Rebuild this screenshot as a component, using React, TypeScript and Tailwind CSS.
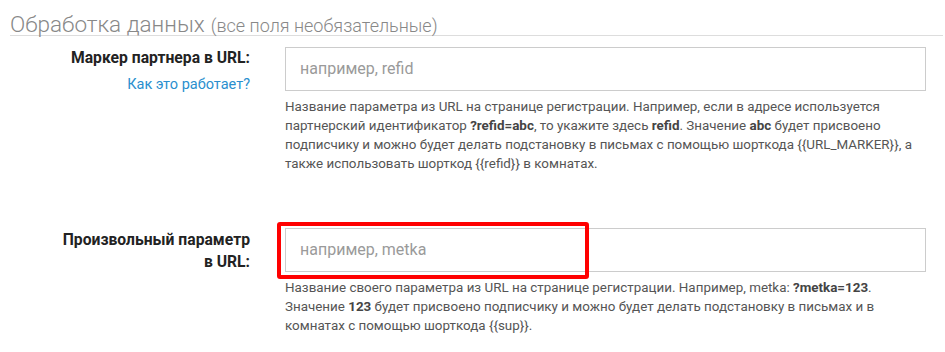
import React from "react";

const B = ({ children }: { children: React.ReactNode }) => (
  <b className="font-bold text-[#444]">{children}</b>
);

const Field = ({ placeholder }: { placeholder: string }) => (
  <div className="h-[44px] border border-[#cccccc] bg-white flex items-center pl-[14px] text-[16px] text-[#9a9a9a] whitespace-nowrap">
    {placeholder}
  </div>
);

export default function App() {
  return (
    <div className="w-[945px] h-[352px] bg-white font-['Roboto','Liberation_Sans',sans-serif] overflow-hidden">
      <div className="ml-[10px] mr-[2px] h-[36px] pt-[12px] border-b border-[#dddddd] text-[#888888] whitespace-nowrap flex items-baseline leading-[24px]">
        <span className="text-[22.5px] font-light">Обработка данных</span>
        <span className="ml-[6px] text-[18px] font-light">(все поля необязательные)</span>
      </div>

      <div className="mt-[11px] flex pr-[19px]">
        <div className="w-[250px] shrink-0 text-right">
          <div className="text-[15.7px] leading-[22px] font-bold text-[#222]">Маркер партнера в URL:</div>
          <div className="mt-[5px] text-[14.5px] leading-[22px] text-[#2a8fce]">Как это работает?</div>
        </div>
        <div className="ml-[35px] flex-1">
          <Field placeholder="например, refid" />
          <div className="mt-[6px] text-[13.4px] leading-[19px] text-[#555] whitespace-nowrap">
            Название параметра из URL на странице регистрации. Например, если в адресе используется
            <br />
            партнерский идентификатор <B>?refid=abc</B>, то укажите здесь <B>refid</B>. Значение <B>abc</B> будет присвоено
            <br />
            подписчику и можно будет делать подстановку в письмах с помощью шорткода {"{{URL_MARKER}}"}, а
            <br />
            также использовать шорткод {"{{refid}}"} в комнатах.
          </div>
        </div>
      </div>

      <div className="mt-[55px] flex pr-[19px]">
        <div className="w-[250px] shrink-0 text-right pt-[1px]">
          <div className="text-[15.7px] leading-[22px] font-bold text-[#222]">
            Произвольный параметр
            <br />в URL:
          </div>
        </div>
        <div className="ml-[35px] flex-1">
          <div className="relative">
            <Field placeholder="например, metka" />
            <div className="absolute left-[-8px] top-[-6px] w-[312px] h-[57px] border-[4px] border-[#ff0000] rounded-[3px] pointer-events-none" />
          </div>
          <div className="mt-[6px] text-[13.4px] leading-[19px] text-[#555] whitespace-nowrap">
            Название своего параметра из URL на странице регистрации. Например, metka: <B>?metka=123</B>.
            <br />
            Значение <B>123</B> будет присвоено подписчику и можно будет делать подстановку в письмах и в
            <br />
            комнатах с помощью шорткода {"{{sup}}"}.
          </div>
        </div>
      </div>
    </div>
  );
}
